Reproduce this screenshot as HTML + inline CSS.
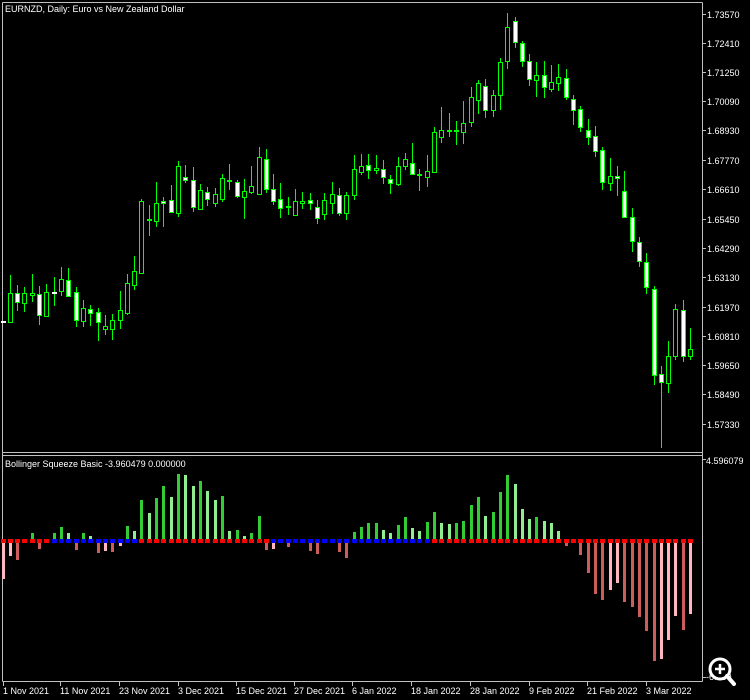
<!DOCTYPE html>
<html><head><meta charset="utf-8"><style>
html,body{margin:0;padding:0;background:#000;}
body{width:750px;height:700px;overflow:hidden;position:relative;font-family:"Liberation Sans",sans-serif;}
svg{position:absolute;left:0;top:0;}
text{font-family:"Liberation Sans",sans-serif;font-size:9px;fill:#fff;}
</style></head><body>
<svg id="s" width="750" height="700" viewBox="0 0 750 700" xmlns="http://www.w3.org/2000/svg">
<rect width="750" height="700" fill="#000"/>
<g stroke="#c0c0c0" stroke-width="1" fill="none">
<line x1="2.5" y1="2.5" x2="702.5" y2="2.5"/>
<line x1="2.5" y1="2.5" x2="2.5" y2="681.5"/>
<line x1="702.5" y1="2.5" x2="702.5" y2="681.5"/>
<line x1="2.5" y1="452.5" x2="702.5" y2="452.5"/>
<line x1="2.5" y1="455.5" x2="702.5" y2="455.5"/>
<line x1="2.5" y1="681.5" x2="702.5" y2="681.5"/>
</g>
<g id="cand"></g>
<g id="hist"></g>
<g id="ticks" stroke="#c0c0c0"></g>
<text x="5" y="12">EURNZD, Daily:  Euro vs New Zealand Dollar</text>
<text x="5" y="467">Bollinger Squeeze Basic -3.960479 0.000000</text>
<g>
<text x="707" y="18">1.73570</text>
<text x="707" y="47">1.72410</text>
<text x="707" y="76">1.71250</text>
<text x="707" y="105">1.70090</text>
<text x="707" y="134">1.68930</text>
<text x="707" y="164">1.67770</text>
<text x="707" y="193">1.66610</text>
<text x="707" y="223">1.65450</text>
<text x="707" y="252">1.64290</text>
<text x="707" y="281">1.63130</text>
<text x="707" y="311">1.61970</text>
<text x="707" y="340">1.60810</text>
<text x="707" y="369">1.59650</text>
<text x="707" y="398">1.58490</text>
<text x="707" y="428">1.57330</text>
<text x="706" y="464">4.596079</text>
<text x="706" y="680">-6.750</text>
</g>
<g>
<text x="3" y="694">1 Nov 2021</text>
<text x="60" y="694">11 Nov 2021</text>
<text x="119" y="694">23 Nov 2021</text>
<text x="178" y="694">3 Dec 2021</text>
<text x="236" y="694">15 Dec 2021</text>
<text x="294" y="694">27 Dec 2021</text>
<text x="352" y="694">6 Jan 2022</text>
<text x="411" y="694">18 Jan 2022</text>
<text x="470" y="694">28 Jan 2022</text>
<text x="529" y="694">9 Feb 2022</text>
<text x="587" y="694">21 Feb 2022</text>
<text x="646" y="694">3 Mar 2022</text>
</g>
<g>
<circle cx="720" cy="669" r="10" fill="#000" stroke="#fff" stroke-width="3"/>
<line x1="727" y1="676" x2="734" y2="684" stroke="#fff" stroke-width="4" stroke-linecap="round"/>
<line x1="715" y1="669" x2="725" y2="669" stroke="#fff" stroke-width="2.5"/>
<line x1="720" y1="664" x2="720" y2="674" stroke="#fff" stroke-width="2.5"/>
</g>
</svg>
<script>
(function(){
var C=[[321,322,321,323],[322,293,275,323],[293,302,285,311],[303,293,287,312],[295,293,274,302],[294,315,286,325],[316,292,284,317],[292,293,277,306],[291,279,267,296],[280,296,268,297],
[292,320,287,327],[321,308,300,327],[309,313,305,326],[312,322,308,341],[329,326,315,335],[329,320,314,340],[320,310,291,329],[313,283,274,315],[285,271,256,290],[273,201,199,273],
[220,219,205,236],[221,203,182,227],[201,203,197,227],[200,212,185,213],[213,166,161,217],[177,180,165,183],[180,207,167,212],[209,190,184,209],[192,199,187,206],[203,194,188,207],
[199,178,174,202],[181,180,164,190],[182,196,180,198],[197,191,179,219],[192,186,166,194],[194,157,147,194],[159,189,149,193],[189,201,174,205],[199,208,183,218],[207,206,197,215],
[215,201,189,215],[203,201,192,209],[200,203,193,210],[207,218,200,224],[214,200,193,220],[203,194,182,214],[195,213,188,216],[213,195,192,220],[195,169,155,200],[172,166,154,175],
[165,170,154,179],[170,168,155,174],[169,177,160,184],[179,183,175,194],[184,166,157,186],[166,159,153,170],[163,174,143,175],[175,174,169,191],[177,171,155,187],[172,132,127,173],
[137,130,107,143],[131,130,113,137],[131,130,121,145],[132,123,101,144],[122,97,87,127],[100,83,80,114],[86,110,79,118],[110,95,90,117],[95,62,58,110],[61,27,13,69],
[21,42,17,48],[43,61,41,67],[61,79,54,86],[80,75,62,97],[75,87,61,98],[89,82,65,92],[83,77,64,91],[78,97,69,100],[99,110,95,125],[109,127,106,132],
[130,137,119,145],[136,151,126,157],[150,182,147,190],[183,176,158,191],[176,178,166,196],[191,217,171,218],[217,241,208,252],[242,261,237,267],[262,287,253,294],[289,375,286,385],
[374,382,366,448],[383,356,341,393],[356,309,304,360],[310,356,300,362],[356,349,328,360]];
var H=[[579,'p','r'],[556,'p','r'],[560,'r','r'],[0,0,'r'],[533,'g','r'],[549,'r','r'],[0,0,'r'],[533,'g','b'],[527,'g','b'],[533,'l','b'],
[550,'r','b'],[533,'g','b'],[536,'l','b'],[553,'r','b'],[551,'p','b'],[552,'r','b'],[546,'p','b'],[526,'g','b'],[531,'l','b'],[500,'g','r'],
[513,'l','r'],[498,'g','r'],[486,'g','r'],[497,'l','r'],[474,'g','r'],[475,'l','r'],[486,'l','r'],[481,'g','r'],[491,'l','r'],[500,'l','r'],
[496,'g','r'],[531,'l','r'],[530,'g','r'],[536,'l','r'],[533,'g','r'],[516,'g','r'],[550,'r','r'],[549,'p','b'],[0,0,'b'],[547,'r','b'],
[0,0,'b'],[0,0,'b'],[551,'r','b'],[554,'r','b'],[0,0,'b'],[0,0,'b'],[552,'r','b'],[558,'r','b'],[532,'g','b'],[527,'g','b'],
[523,'g','b'],[523,'g','b'],[530,'l','b'],[533,'l','b'],[525,'g','b'],[517,'g','b'],[528,'l','b'],[531,'l','b'],[522,'g','b'],[512,'g','r'],
[523,'l','r'],[524,'l','r'],[523,'g','r'],[521,'g','r'],[505,'g','r'],[497,'g','r'],[516,'l','r'],[512,'g','r'],[492,'g','r'],[475,'g','r'],
[484,'l','r'],[509,'l','r'],[519,'l','r'],[517,'g','r'],[521,'l','r'],[523,'l','r'],[531,'l','r'],[546,'r','r'],[0,0,'r'],[555,'r','r'],
[573,'r','r'],[594,'r','r'],[600,'r','r'],[590,'p','r'],[583,'p','r'],[602,'r','r'],[607,'r','r'],[617,'r','r'],[631,'r','r'],[661,'r','r'],
[659,'p','r'],[640,'p','r'],[616,'p','r'],[630,'r','r'],[614,'p','r']];
var col={g:'#32cd32',l:'#90ee90',r:'#cd5c5c',p:'#ffb6c1'};
var ns='http://www.w3.org/2000/svg';
function el(p,t,a){var e=document.createElementNS(ns,t);for(var k in a)e.setAttribute(k,a[k]);p.appendChild(e);return e;}
var gc=document.getElementById('cand'),gh=document.getElementById('hist'),gt=document.getElementById('ticks');
function X(i){return Math.round(2.5+7.315*i);}
for(var i=0;i<C.length;i++){var c=C[i],x=X(i),o=c[0],cl=c[1],h=c[2],l=c[3];
 var bt=Math.min(o,cl),bb=Math.max(o,cl);
 el(gc,'rect',{x:x,y:h,width:1,height:Math.max(1,l-h),fill:'#00ff00'});
 var bear=cl>o;
 if(bb-bt<2){el(gc,'rect',{x:x-2,y:bt,width:5,height:2,fill:bear?'#fff':'#00ff00'});}
 else{el(gc,'rect',{x:x-2,y:bt,width:5,height:bb-bt+1,fill:'#00ff00'});
  el(gc,'rect',{x:x-1,y:bt+1,width:3,height:bb-bt-1,fill:bear?'#fff':'#000'});}
}
for(var i=0;i<H.length;i++){var h=H[i],x=X(i);
 if(h[1]){ if(h[0]<540) el(gh,'rect',{x:x-1,y:h[0],width:3,height:539-h[0],fill:col[h[1]]});
  else el(gh,'rect',{x:x-1,y:543,width:3,height:h[0]-543,fill:col[h[1]]});}
 el(gh,'rect',{x:x-2,y:539,width:5,height:4,fill:h[2]=='r'?'#ff0000':'#0000ff'});
}
var py=[14,43,72,101,130,160,189,219,248,277,307,336,365,394,424,459,677];
py.forEach(function(y){el(gt,'line',{x1:703,y1:y+.5,x2:706,y2:y+.5});});
[3,60,119,178,236,294,352,411,470,529,587,646].forEach(function(x){el(gt,'line',{x1:x+.5,y1:682,x2:x+.5,y2:686});});
})();
</script>
</body></html>
